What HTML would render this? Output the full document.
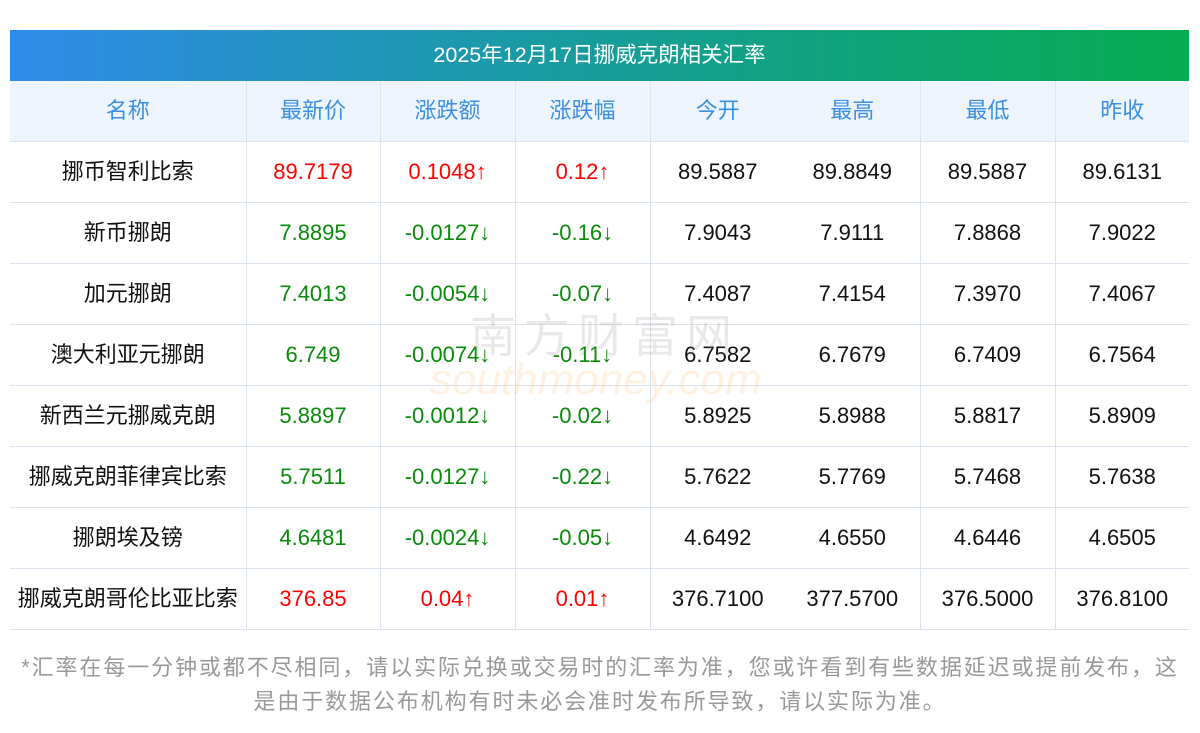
<!DOCTYPE html>
<html><head><meta charset="utf-8"><style>
body{margin:0;width:1200px;height:733px;background:#fff;font-family:"Liberation Sans","Noto Sans CJK SC",sans-serif;position:relative;overflow:hidden}
.title{position:absolute;left:10px;top:30px;width:1179px;height:51px;background:linear-gradient(90deg,#2f8bea,#12a08a 60%,#07ad51);color:#fff;font-size:21.5px;line-height:51px;text-align:center}
table{position:absolute;left:10px;top:81px;border-collapse:collapse;table-layout:fixed;width:1179px}
td{height:60px;border-bottom:1px solid #dde3ee;border-left:1px solid #dde3ee;text-align:center;font-size:22px;color:#111;padding:0;line-height:24px}
td:first-child{border-left:none}
td.n{border-left:none}
tr.h td{background:#eef4fd;color:#3a8fe2;height:60px}
.r{color:#f00}.g{color:#0a8a0a}
.note{position:absolute;left:0;width:1200px;top:651px;text-align:center;color:#999;font-size:22px;line-height:34px;letter-spacing:1.9px}
.wm{position:absolute;left:470px;top:300px;font-size:46px;color:rgba(150,150,150,.22);letter-spacing:8px}
.wm2{position:absolute;left:430px;top:355px;font-size:44px;font-style:italic;color:rgba(250,190,120,.22)}
</style></head><body>
<div class="title">2025年12月17日挪威克朗相关汇率</div>
<table>
<colgroup><col style="width:236px"><col style="width:134px"><col style="width:135px"><col style="width:135px"><col style="width:135px"><col style="width:135px"><col style="width:135px"><col style="width:134px"></colgroup>
<tr class="h"><td>名称</td><td>最新价</td><td>涨跌额</td><td>涨跌幅</td><td>今开</td><td class="n">最高</td><td>最低</td><td>昨收</td></tr>
<tr><td>挪币智利比索</td><td class="r">89.7179</td><td class="r">0.1048↑</td><td class="r">0.12↑</td><td>89.5887</td><td class="n">89.8849</td><td>89.5887</td><td>89.6131</td></tr>
<tr><td>新币挪朗</td><td class="g">7.8895</td><td class="g">-0.0127↓</td><td class="g">-0.16↓</td><td>7.9043</td><td class="n">7.9111</td><td>7.8868</td><td>7.9022</td></tr>
<tr><td>加元挪朗</td><td class="g">7.4013</td><td class="g">-0.0054↓</td><td class="g">-0.07↓</td><td>7.4087</td><td class="n">7.4154</td><td>7.3970</td><td>7.4067</td></tr>
<tr><td>澳大利亚元挪朗</td><td class="g">6.749</td><td class="g">-0.0074↓</td><td class="g">-0.11↓</td><td>6.7582</td><td class="n">6.7679</td><td>6.7409</td><td>6.7564</td></tr>
<tr><td>新西兰元挪威克朗</td><td class="g">5.8897</td><td class="g">-0.0012↓</td><td class="g">-0.02↓</td><td>5.8925</td><td class="n">5.8988</td><td>5.8817</td><td>5.8909</td></tr>
<tr><td>挪威克朗菲律宾比索</td><td class="g">5.7511</td><td class="g">-0.0127↓</td><td class="g">-0.22↓</td><td>5.7622</td><td class="n">5.7769</td><td>5.7468</td><td>5.7638</td></tr>
<tr><td>挪朗埃及镑</td><td class="g">4.6481</td><td class="g">-0.0024↓</td><td class="g">-0.05↓</td><td>4.6492</td><td class="n">4.6550</td><td>4.6446</td><td>4.6505</td></tr>
<tr><td>挪威克朗哥伦比亚比索</td><td class="r">376.85</td><td class="r">0.04↑</td><td class="r">0.01↑</td><td>376.7100</td><td class="n">377.5700</td><td>376.5000</td><td>376.8100</td></tr>
</table>
<div class="wm">南方财富网</div>
<div class="wm2">southmoney.com</div>
<div class="note">*汇率在每一分钟或都不尽相同，请以实际兑换或交易时的汇率为准，您或许看到有些数据延迟或提前发布，这<br>是由于数据公布机构有时未必会准时发布所导致，请以实际为准。</div>
</body></html>
